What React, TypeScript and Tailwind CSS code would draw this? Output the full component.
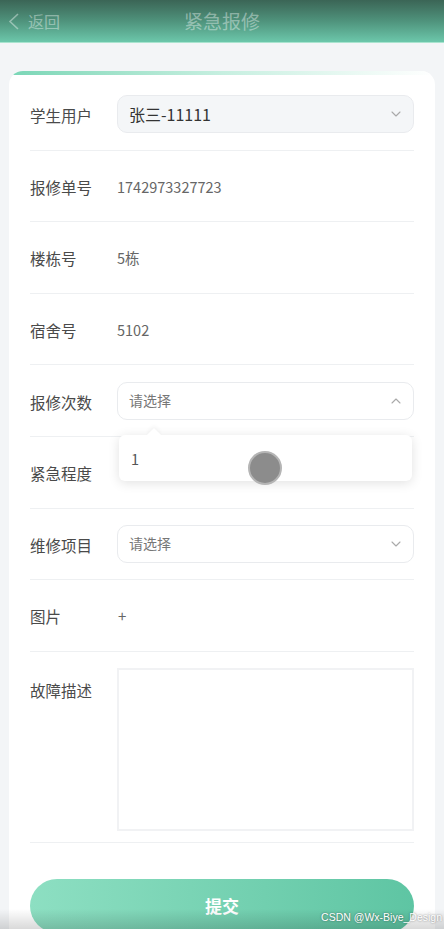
import { ChevronDown, ChevronUp } from "lucide-react";
import type { ReactNode } from "react";

const font = { fontFamily: '"Noto Sans CJK SC", "Noto Sans", sans-serif' };

const Row = ({ label, children, tall }: { label: string; children?: ReactNode; tall?: boolean }) => (
  <div
    className={`relative flex border-b border-[#eef0f2] ${
      tall ? "items-start pt-[16px] pb-[11px]" : "h-[71.6px] items-center"
    }`}
  >
    <div className={`w-[87px] shrink-0 pt-[3px] text-[15.5px] text-[#4a4a4a] ${tall ? "pt-[11px]" : ""}`}>{label}</div>
    <div className="flex-1">{children}</div>
  </div>
);

const SelectBox = ({ value, placeholder, open, filled }: { value?: string; placeholder?: string; open?: boolean; filled?: boolean }) => (
  <div
    className={`flex h-[38px] items-center justify-between rounded-[10px] border border-[#e9ebee] pl-[11px] pr-[9px] ${
      filled ? "bg-[#f4f6f8]" : "bg-white"
    }`}
  >
    {value ? (
      <span className="text-[16px] text-[#333]">{value}</span>
    ) : (
      <span className="text-[14px] text-[#777]">{placeholder}</span>
    )}
    {open ? (
      <ChevronUp size={16} strokeWidth={1.6} className="text-[#a9a9a9]" />
    ) : (
      <ChevronDown size={16} strokeWidth={1.6} className="text-[#a9a9a9]" />
    )}
  </div>
);

export default function App() {
  return (
    <div className="relative h-[931px] w-[444px] overflow-hidden bg-[#f3f5f7]" style={font}>
      <header className="relative flex h-[43px] items-center border-b border-[#a9e4cf] bg-gradient-to-b from-[#3b6556] via-[#4f937c] to-[#6cc7ab]">
        <div className="flex items-center pl-[8px] text-white/40">
          <svg width="11" height="17" viewBox="0 0 11 17" fill="none" stroke="currentColor" strokeWidth="1.6">
            <polyline points="10,1 2,8.5 10,16" />
          </svg>
          <span className="ml-[9px] text-[16px]">返回</span>
        </div>
        <div className="absolute left-0 right-0 text-center text-[19px] text-white/40">紧急报修</div>
      </header>

      <div className="mx-[9px] mt-[28px] overflow-hidden rounded-[14px] bg-white">
        <div className="h-[4px] rounded-t-[14px] bg-gradient-to-r from-[#79d6b6] via-[#c6efe0] to-white" />
        <div className="px-[21px] pt-[4px]">
          <Row label="学生用户">
            <SelectBox value="张三-11111" filled />
          </Row>
          <Row label="报修单号">
            <span className="text-[14.5px] text-[#666]">1742973327723</span>
          </Row>
          <Row label="楼栋号">
            <span className="text-[14.5px] text-[#666]">5栋</span>
          </Row>
          <Row label="宿舍号">
            <span className="text-[14.5px] text-[#666]">5102</span>
          </Row>
          <Row label="报修次数">
            <SelectBox placeholder="请选择" open />
            <div className="absolute left-[89px] right-[2px] top-[70px] z-10 flex h-[46px] items-center rounded-[6px] bg-white pl-[12px] text-[14.5px] text-[#555] shadow-[0_2px_12px_rgba(0,0,0,0.12)]">
              <div className="absolute -top-[5px] left-[30px] h-[10px] w-[10px] rotate-45 bg-white shadow-[-2px_-2px_4px_rgba(0,0,0,0.04)]" />
              <span className="relative">1</span>
              <div className="absolute left-[129px] top-[16px] h-[34px] w-[34px] rounded-full border-2 border-[#b5b5b5] bg-[#8c8c8c]" />
            </div>
          </Row>
          <Row label="紧急程度" />
          <Row label="维修项目">
            <SelectBox placeholder="请选择" />
          </Row>
          <Row label="图片">
            <span className="pl-[1px] text-[15px] text-[#666]">+</span>
          </Row>
          <Row label="故障描述" tall>
            <div className="h-[163px] border-2 border-[#f1f2f4] bg-white" />
          </Row>
          <div className="pt-[36px] pb-[20px]">
            <button className="flex h-[54px] w-full items-center justify-center rounded-full bg-gradient-to-r from-[#8ddfc2] to-[#5ec5a3] text-[17px] font-bold text-white">
              提交
            </button>
          </div>
        </div>
      </div>

      <div className="absolute bottom-[2px] left-0 right-0 h-[20px] bg-gradient-to-b from-transparent to-black/15" />
      <div
        className="absolute bottom-[5px] right-[2px] whitespace-nowrap text-[10.5px] text-white"
        style={{ fontFamily: '"Liberation Sans", sans-serif', textShadow: "0 0 2px rgba(0,0,0,0.5)" }}
      >
        CSDN @Wx-Biye_Design
      </div>
      <div className="absolute bottom-0 left-0 right-0 h-[2px] bg-white" />
    </div>
  );
}
